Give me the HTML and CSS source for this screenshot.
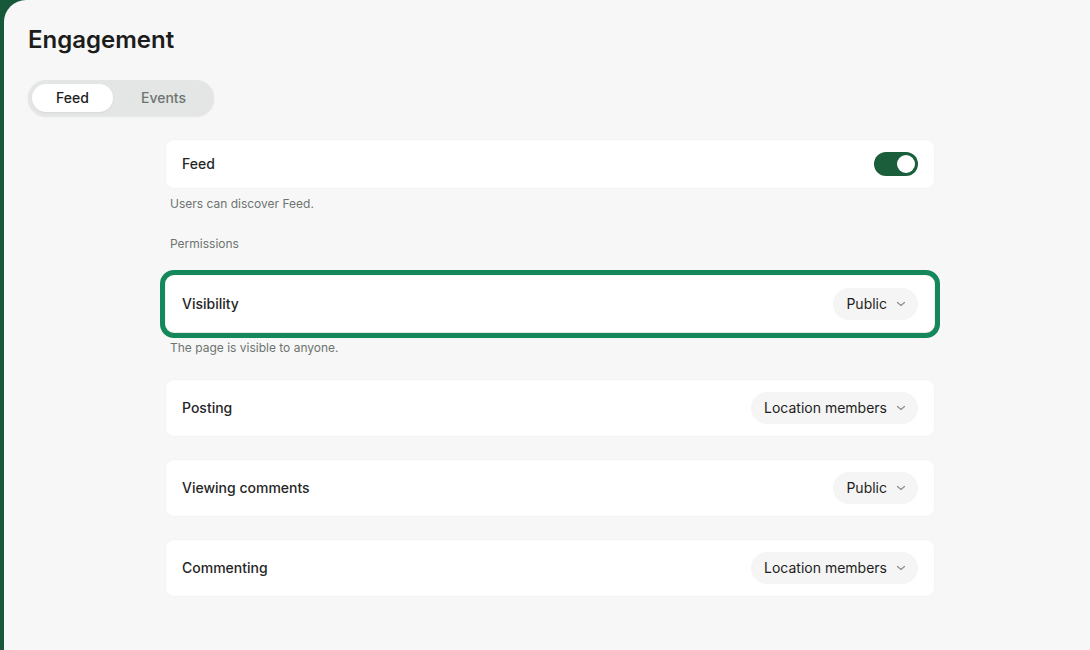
FILE: index.html
```html
<!DOCTYPE html>
<html lang="en">
<head>
    <meta charset="UTF-8" />
    <meta name="viewport" content="width=device-width, initial-scale=1.0" />
    <title>Engagement</title>
    <link rel="stylesheet" href="styles.css">
</head>
<body>
<div class="panel">
    <h1 class="title">Engagement</h1>

    <div class="tabs">
        <button class="tab active">Feed</button>
        <button class="tab">Events</button>
    </div>

    <div class="settings">
        <div class="row">
            <span class="label">Feed</span>
            <span class="toggle on"><span class="knob"></span></span>
        </div>
        <p class="hint">Users can discover Feed.</p>

        <p class="section">Permissions</p>

        <div class="row tall focused">
            <span class="label">Visibility</span>
            <button class="select">Public <svg class="chev" viewBox="0 0 10 6"><path d="M1.5 1.5 5 4.5 8.5 1.5"/></svg></button>
        </div>
        <p class="hint">The page is visible to anyone.</p>

        <div class="row tall spaced">
            <span class="label">Posting</span>
            <button class="select">Location members <svg class="chev" viewBox="0 0 10 6"><path d="M1.5 1.5 5 4.5 8.5 1.5"/></svg></button>
        </div>

        <div class="row tall spaced">
            <span class="label">Viewing comments</span>
            <button class="select">Public <svg class="chev" viewBox="0 0 10 6"><path d="M1.5 1.5 5 4.5 8.5 1.5"/></svg></button>
        </div>

        <div class="row tall spaced">
            <span class="label">Commenting</span>
            <button class="select">Location members <svg class="chev" viewBox="0 0 10 6"><path d="M1.5 1.5 5 4.5 8.5 1.5"/></svg></button>
        </div>
    </div>
</div>
</body>
</html>
```

FILE: styles.css
```css
html, body {
  margin: 0;
  height: 100%;
}
body {
  background: #17573a;
  font-family: Inter, "Noto Sans", Arial, sans-serif;
  color: #1f1f1f;
  overflow: hidden;
}
.panel {
  margin-left: 4px;
  height: 100%;
  background: #f7f7f7;
  border-top-left-radius: 22px;
  padding: 25px 24px 0 24px;
  box-sizing: border-box;
}
.title {
  margin: 0;
  font-size: 24px;
  line-height: 29px;
  font-weight: 600;
  color: #1c1c1c;
}
.tabs {
  display: inline-flex;
  margin-top: 26px;
  padding: 4px;
  background: #e3e6e4;
  border-radius: 18px;
  box-shadow: 0 1px 2px rgba(0, 0, 0, 0.08);
}
.tab {
  border: none;
  background: transparent;
  font-family: inherit;
  font-size: 14px;
  font-weight: 500;
  color: #6e7471;
  height: 28px;
  width: 97px;
  padding: 0 0 2px 4px;
  border-radius: 14px;
  cursor: pointer;
}
.tab.active {
  width: 81px;
  padding: 0 0 2px 0;
  background: #fff;
  color: #1c1c1c;
  box-shadow: 0 1px 2px rgba(0, 0, 0, 0.06);
}
.settings {
  width: 768px;
  margin: 24px 0 0 138px;
}
.row {
  display: flex;
  align-items: center;
  justify-content: space-between;
  height: 48px;
  padding: 0 16px;
  background: #fff;
  border-radius: 8px;
  box-shadow: 0 0 0 1px rgba(0, 0, 0, 0.015);
}
.row.tall {
  height: 56px;
}
.row.spaced {
  margin-top: 24px;
}
/* focused row gets the thick green ring */
.row.focused {
  outline: 5px solid #14885a;
  outline-offset: 1px;
  border-radius: 8px;
  box-shadow: 0 4px 4px rgba(0, 0, 0, 0.06);
}
.label {
  font-size: 14px;
  font-weight: 500;
  line-height: 16px;
  margin-top: -1px;
  color: #262626;
}
.hint, .section {
  margin: 8px 0 0 4px;
  font-size: 12px;
  line-height: 16px;
  color: #6d7470;
}
.section {
  margin-top: 24px;
  margin-bottom: 24px;
}
.toggle {
  display: flex;
  align-items: center;
  width: 44px;
  height: 24px;
  border-radius: 12px;
  background: #d4d8d6;
  box-sizing: border-box;
  padding: 3px;
}
.toggle.on {
  background: #1b5e3b;
  justify-content: flex-end;
}
.knob {
  width: 18px;
  height: 18px;
  border-radius: 50%;
  background: #fff;
}
.select {
  display: flex;
  align-items: center;
  gap: 9px;
  height: 32px;
  padding: 0 12px 2px 13px;
  border: none;
  border-radius: 16px;
  background: #f4f5f4;
  font-family: inherit;
  font-size: 14px;
  color: #1e1e1e;
  cursor: pointer;
}
.chev {
  width: 10px;
  height: 6px;
  margin-top: 2px;
  fill: none;
  stroke: #8a8f8c;
  stroke-width: 1.2;
  stroke-linecap: round;
  stroke-linejoin: round;
}
```
